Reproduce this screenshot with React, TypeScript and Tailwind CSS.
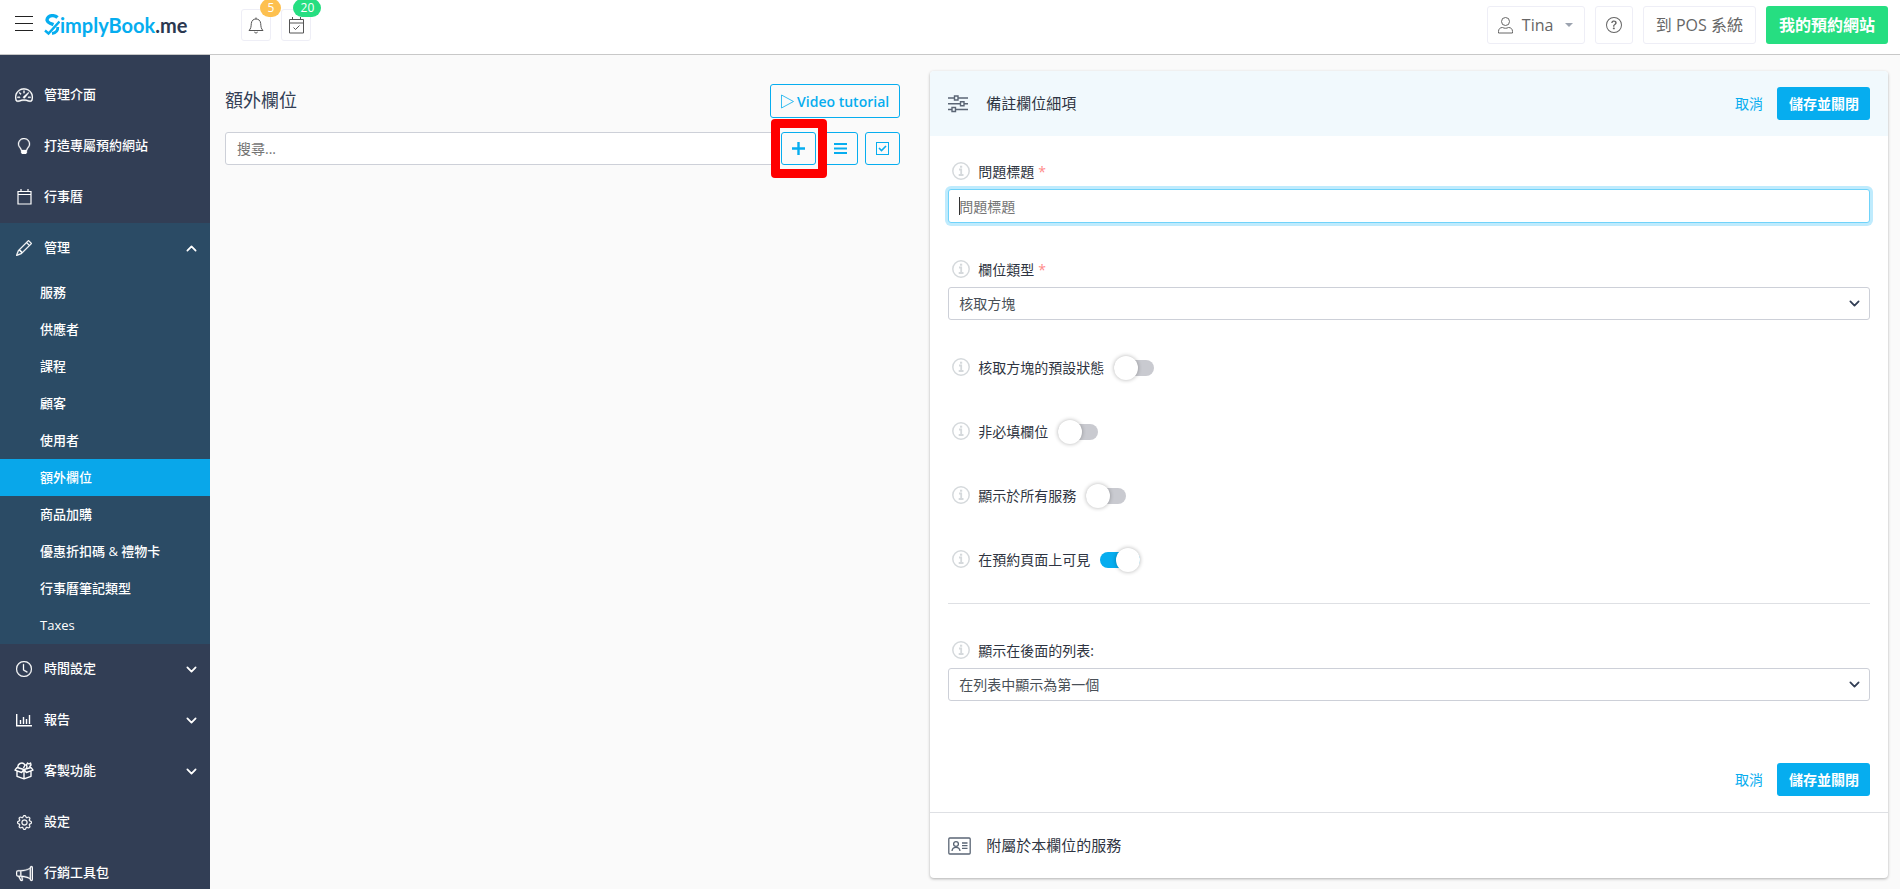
import { useState, type ReactNode } from 'react'
import {
  BsSpeedometer2, BsLightbulb, BsPencil, BsClock, BsGear, BsMegaphone,
  BsChevronDown, BsChevronUp, BsQuestionCircle,
} from 'react-icons/bs'

type MenuItem = { label: string; icon: ReactNode; children?: string[]; arrow?: boolean }

function ChartIcon() {
  return (
    <svg width="16" height="14" viewBox="0 0 16 14" fill="none" stroke="currentColor" strokeWidth="1.4">
      <path d="M.7 1v11.8H16M4.500 11V7M7.500 11V4M10.500 11V6M13.500 11V2" />
    </svg>
  )
}

function CalendarIcon() {
  return (
    <svg width="15" height="16" viewBox="0 0 15 16" fill="none" stroke="currentColor" strokeWidth="1.2">
      <path d="M1 2.500h13v12.500H1zM1 5.500h13M4 0v2.500M11 0v2.500" />
    </svg>
  )
}

function BoxIcon() {
  return (
    <svg width="20" height="18" viewBox="0 0 20 18" fill="none" stroke="currentColor" strokeWidth="1.4" strokeLinejoin="round">
      <path d="M3 9.500v4.800l7 2.500 7-2.500V9.500M10 7.500v9M3 5.500l7 2 7-2M3 5.500L1 8.200l6.600 2.300L10 7.500l2.400 3L19 8.200l-2-2.700" />
      <path d="M4 5.500a3.500 3.500 0 0 1 2-4c2-.8 4-.2 5 1.500l-1.500 3M11 3c1.500-.5 2.500 1 1.500 3M12.500 3l1-2 1.500 1 1.500-1 .5 2-1.500 2" />
    </svg>
  )
}

function SlidersIcon() {
  return (
    <svg width="20" height="18" viewBox="0 0 20 18" fill="none" stroke="#5b6675" strokeWidth="1.4">
      <path d="M0 3h6.500M10 3h10M0 8.700h12.500M16 8.700h4M0 14.500h4M7.500 14.500H20" />
      <path d="M6.500 1H10v4H6.500zM12.500 6.700H16v4h-3.500zM4 12.500h3.500v4H4z" />
    </svg>
  )
}

function CardIcon() {
  return (
    <svg width="23" height="18" viewBox="0 0 23 18" fill="none" stroke="#5b6675" strokeWidth="1.3">
      <rect x=".8" y="1" width="21.400" height="16" rx="1" />
      <circle cx="8" cy="7" r="2.400" />
      <path d="M4 14c.3-2.500 1.800-3.600 4-3.600s3.700 1.100 4 3.600M14 6h5.500M14 8.700h5.500M14 11.400h5.500" />
    </svg>
  )
}

const MENU: MenuItem[] = [
  { label: '管理介面', icon: <BsSpeedometer2 size={18} strokeWidth={0.3} /> },
  { label: '打造專屬預約網站', icon: <BsLightbulb size={16} strokeWidth={0.3} /> },
  { label: '行事曆', icon: <CalendarIcon /> },
  {
    label: '管理',
    icon: <BsPencil size={16} strokeWidth={0.3} />,
    children: ['服務', '供應者', '課程', '顧客', '使用者', '額外欄位', '商品加購', '優惠折扣碼 & 禮物卡', '行事曆筆記類型', 'Taxes'],
  },
  { label: '時間設定', icon: <BsClock size={16} strokeWidth={0.3} />, arrow: true },
  { label: '報告', icon: <ChartIcon />, arrow: true },
  { label: '客製功能', icon: <BoxIcon />, arrow: true },
  { label: '設定', icon: <BsGear size={15} strokeWidth={0.3} /> },
  { label: '行銷工具包', icon: <BsMegaphone size={17} strokeWidth={0.3} /> },
]

function Logo() {
  return (
    <a href="#" aria-label="SimplyBook.me" className="ml-[11px] flex items-center">
      <svg width="16" height="22" viewBox="0 0 16 22" fill="none" stroke="#06adef">
        <path d="M13.500 3.500C11.500 1.500 7 .8 4.500 3 2 5.500 3 8 6 9.300l3.500 1.400" strokeWidth="3.400" />
        <path d="M1 16.500l3.500 3L15.500 7.500" strokeWidth="2.400" />
        <path d="M8 19.500c3.500-.5 6-2.500 5.800-6.500" strokeWidth="2.800" />
      </svg>
      <span className="font-['Lato',sans-serif] text-[20px] leading-6 font-bold text-[#06adef]">
        implyBook<span className="text-[#2b3850]">.me</span>
      </span>
    </a>
  )
}

function Header() {
  return (
    <header className="flex h-[55px] shrink-0 items-center justify-between border-b border-[#c8c8c8] bg-white pr-3 pl-[15px]">
      <div className="flex items-center pb-1">
        <button aria-label="Menu" className="mb-1 flex h-[15px] w-[18px] flex-col justify-between">
          <span className="h-px w-full bg-[#222]" />
          <span className="h-px w-full bg-[#222]" />
          <span className="h-px w-full bg-[#222]" />
        </button>
        <Logo />
      </div>
      <div className="ml-[54px] flex flex-1 gap-[10px] pb-1">
        <button aria-label="Notifications" className="relative flex h-8 w-[30px] items-center justify-center rounded-[3px] border border-[#eeeef6] text-[#555]">
          <svg width="16" height="17" viewBox="0 0 16 17" fill="none" stroke="currentColor">
            <path d="M8 .5v1.500M1 13.500h14c-2-2-2-3.500-2.300-7C12.400 3.500 10.500 2 8 2S3.600 3.500 3.300 6.500C3 10 3 11.500 1 13.500zM6.300 15c.8 1.300 2.600 1.300 3.400 0" />
          </svg>
          <span className="absolute -top-[11px] left-[18px] flex h-[18px] w-[21px] items-center justify-center rounded-full bg-[#fdc04f] text-[12px] text-white">5</span>
        </button>
        <button aria-label="Bookings" className="relative flex h-8 w-[30px] items-center justify-center rounded-[3px] border border-[#eeeef6] text-[#555]">
          <svg width="15" height="17" viewBox="0 0 15 17" fill="none" stroke="currentColor">
            <path d="M.5 2.500h14v13.500H.5zM.5 6h14M3.500 0v2.500M11.500 0v2.500M4.500 10.500l2 2 4-4" />
          </svg>
          <span className="absolute -top-[11px] left-[11px] flex h-[18px] w-7 items-center justify-center rounded-full bg-[#26de81] text-[12px] text-white">20</span>
        </button>
      </div>
      <div className="flex gap-[10px] pb-1 text-[16px] text-[#666]">
        <button className="flex h-[38px] w-[98px] items-center rounded-[3px] border border-[#eeeef6] pl-[10px]">
          <svg width="15" height="17" viewBox="0 0 15 17" fill="none" stroke="currentColor">
            <circle cx="7.500" cy="4.500" r="4" />
            <path d="M.5 16v-1.500c0-2.500 1.500-4 4-4 2 1 4 1 6 0 2.500 0 4 1.500 4 4V16z" />
          </svg>
          <span className="ml-[9px]">Tina</span>
          <span className="ml-3 border-x-4 border-t-4 border-x-transparent border-t-[#9ca3af]" />
        </button>
        <button aria-label="Help" className="flex h-[38px] w-[38px] items-center justify-center rounded-[3px] border border-[#eeeef6]">
          <BsQuestionCircle size={16} />
        </button>
        <button className="h-[38px] rounded-[3px] border border-[#eeeef6] px-3">到 POS 系統</button>
        <button className="h-[38px] rounded-[3px] bg-[#26de81] px-[13px] font-bold text-white">我的預約網站</button>
      </div>
    </header>
  )
}

function Sidebar() {
  return (
    <nav className="w-[210px] shrink-0 overflow-hidden bg-[#323e55] pt-[15px] text-[13px] font-medium text-white">
      {MENU.map((item) => (
        <div key={item.label} className={item.children ? 'bg-[#2b4b65]' : ''}>
          <a href="#" className="flex h-[51px] items-center pr-[13px] pb-px pl-3">
            <span className="flex w-6 justify-center">{item.icon}</span>
            <span className="ml-2 flex-1">{item.label}</span>
            {item.children && <BsChevronUp size={11} strokeWidth={1.5} />}
            {item.arrow && <BsChevronDown size={11} strokeWidth={1.5} />}
          </a>
          {item.children?.map((child) => (
            <a key={child} href="#" className={`flex h-[37px] items-center pl-10 ${child === '額外欄位' ? 'bg-[#09a7ea]' : ''}`}>
              {child}
            </a>
          ))}
        </div>
      ))}
    </nav>
  )
}

const OUTLINE_BTN = 'flex items-center justify-center rounded-[3px] border border-[#06adef] text-[#06adef]'

function FieldList() {
  return (
    <section className="col-span-5 pt-[29px] pr-[14px] pl-[15px]">
      <div className="flex items-center justify-between">
        <h1 className="pb-[2px] text-[18px] leading-6 text-[#323e55]">額外欄位</h1>
        <button className={`${OUTLINE_BTN} h-[34px] gap-[3px] px-[10px] text-[14px] font-semibold`}>
          <svg width="13" height="15" viewBox="0 0 13 15" fill="none" stroke="currentColor" strokeWidth="0.8">
            <path d="M.5 1v13l12-6.500z" />
          </svg>
          Video tutorial
        </button>
      </div>
      <div className="mt-[14px] flex gap-[7px]">
        <input aria-label="搜尋" placeholder="搜尋..." className="h-[33px] min-w-0 flex-1 rounded-[3px] border border-[#cdd0d8] bg-white px-[11px] text-[14px] placeholder:text-[#757575]" />
        <div className="relative">
          <button aria-label="Add" className={`${OUTLINE_BTN} h-[33px] w-[35px]`}>
            <svg width="13" height="13" viewBox="0 0 13 13" stroke="currentColor" strokeWidth="2.400">
              <path d="M6.500 0v13M0 6.500h13" />
            </svg>
          </button>
          <span className="pointer-events-none absolute -top-[13px] -left-[10px] h-[59px] w-[56px] rounded-[4px] border-[9px] border-[#fe0000]" />
        </div>
        <button aria-label="List" className={`${OUTLINE_BTN} h-[33px] w-[35px]`}>
          <svg width="13" height="11" viewBox="0 0 13 11" stroke="currentColor" strokeWidth="1.800">
            <path d="M0 1h13M0 5.500h13M0 10h13" />
          </svg>
        </button>
        <button aria-label="Select" className={`${OUTLINE_BTN} h-[33px] w-[35px]`}>
          <svg width="13" height="13" viewBox="0 0 13 13" fill="none" stroke="currentColor">
            <rect x=".5" y=".5" width="12" height="12" />
            <path d="M3 6l2.500 2.500L10 4" strokeWidth="1.600" />
          </svg>
        </button>
      </div>
    </section>
  )
}

function InfoIcon() {
  return (
    <svg width="18" height="18" viewBox="0 0 18 18" fill="none" stroke="#d5d9dc" strokeWidth="1.500" className="shrink-0">
      <circle cx="9" cy="9" r="8.200" />
      <path d="M7 7.500h2.200v5.300M6.700 13h4.800" strokeWidth="1.800" />
      <path d="M8 4.700h2.200" strokeWidth="2" />
    </svg>
  )
}

function FieldLabel({ id, text, required }: { id: string; text: string; required?: boolean }) {
  return (
    <label htmlFor={id} className="flex h-[22px] items-center pb-[2px] pl-1 text-[14px] text-[#2f3542]">
      <InfoIcon />
      <span className="ml-2">{text}</span>
      {required && <span className="ml-1 text-[#ff8a8a]">*</span>}
    </label>
  )
}

function SelectField({ id, text, value, required }: { id: string; text: string; value: string; required?: boolean }) {
  return (
    <div>
      <FieldLabel id={id} text={text} required={required} />
      <div className="relative mt-[6px]">
        <select id={id} className="h-[33px] w-full appearance-none rounded-[3px] border border-[#cdd0d8] bg-white px-[10px] text-[14px] text-[#495057]">
          <option>{value}</option>
        </select>
        <BsChevronDown size={11} strokeWidth={1.5} className="pointer-events-none absolute top-[11px] right-[10px] text-[#323e55]" />
      </div>
    </div>
  )
}

function Toggle({ id, text, on }: { id: string; text: string; on?: boolean }) {
  const [checked, setChecked] = useState(!!on)
  return (
    <div className="flex h-6 items-center">
      <FieldLabel id={id} text={text} />
      <span className="relative ml-[10px] flex h-6 w-10 items-center">
        <input
          id={id}
          type="checkbox"
          checked={checked}
          onChange={() => setChecked(!checked)}
          className="peer h-4 w-10 appearance-none rounded-full bg-[#c9cad0] checked:bg-[#06adef]"
        />
        <span className="pointer-events-none absolute top-0 left-0 h-6 w-6 rounded-full bg-white shadow-[0_0_4px_rgba(0,0,0,0.3)] peer-checked:left-4" />
      </span>
    </div>
  )
}

function Actions() {
  return (
    <div className="flex items-center gap-[14px] text-[14px]">
      <a href="#" className="text-[#06adef]">取消</a>
      <button className="h-[33px] w-[93px] rounded-[3px] bg-[#06adef] pl-px font-bold text-white">儲存並關閉</button>
    </div>
  )
}

function DetailCard() {
  return (
    <section className="col-span-7 pt-4 pr-3 pl-4">
      <div className="overflow-hidden rounded-[4px] bg-white shadow-[0_1px_3px_rgba(0,0,0,0.3)]">
        <div className="flex h-[65px] items-center justify-between bg-[#f1f9fd] px-[18px]">
          <h2 className="flex items-center gap-[18px] text-[15px] text-[#2f3542]">
            <SlidersIcon />
            備註欄位細項
          </h2>
          <Actions />
        </div>
        <form className="px-[18px] pt-[25px] pb-4">
          <FieldLabel id="title" text="問題標題" required />
          <div className="relative mt-[6px]">
            <input
              id="title"
              placeholder="問題標題"
              className="h-[34px] w-full rounded-[3px] border border-[#70d3fa] bg-white px-[10px] text-[14px] shadow-[0_0_0_3px_#bfebfd] outline-none placeholder:text-[#757575]"
            />
            <span className="pointer-events-none absolute top-2 left-[11px] h-[18px] w-px bg-[#333]" />
          </div>
          <div className="mt-9">
            <SelectField id="type" text="欄位類型" value="核取方塊" required />
          </div>
          <div className="mt-9 flex flex-col gap-10">
            <Toggle id="default" text="核取方塊的預設狀態" />
            <Toggle id="optional" text="非必填欄位" />
            <Toggle id="all" text="顯示於所有服務" />
            <Toggle id="visible" text="在預約頁面上可見" on />
          </div>
          <hr className="mt-[31px] mb-9 border-[#dee0e4]" />
          <SelectField id="position" text="顯示在後面的列表:" value="在列表中顯示為第一個" />
          <div className="mt-[62px] flex justify-end">
            <Actions />
          </div>
        </form>
        <div className="flex h-[66px] items-center gap-[15px] border-t border-[#dee0e4] px-[18px]">
          <CardIcon />
          <h2 className="text-[15px] text-[#2f3542]">附屬於本欄位的服務</h2>
        </div>
      </div>
    </section>
  )
}

export default function App() {
  return (
    <div className="flex h-screen flex-col overflow-hidden bg-[#fafafa] font-['Open_Sans','Noto_Sans_CJK_TC',sans-serif]">
      <Header />
      <div className="flex min-h-0 flex-1">
        <Sidebar />
        <main className="grid flex-1 grid-cols-12">
          <FieldList />
          <DetailCard />
        </main>
      </div>
    </div>
  )
}
